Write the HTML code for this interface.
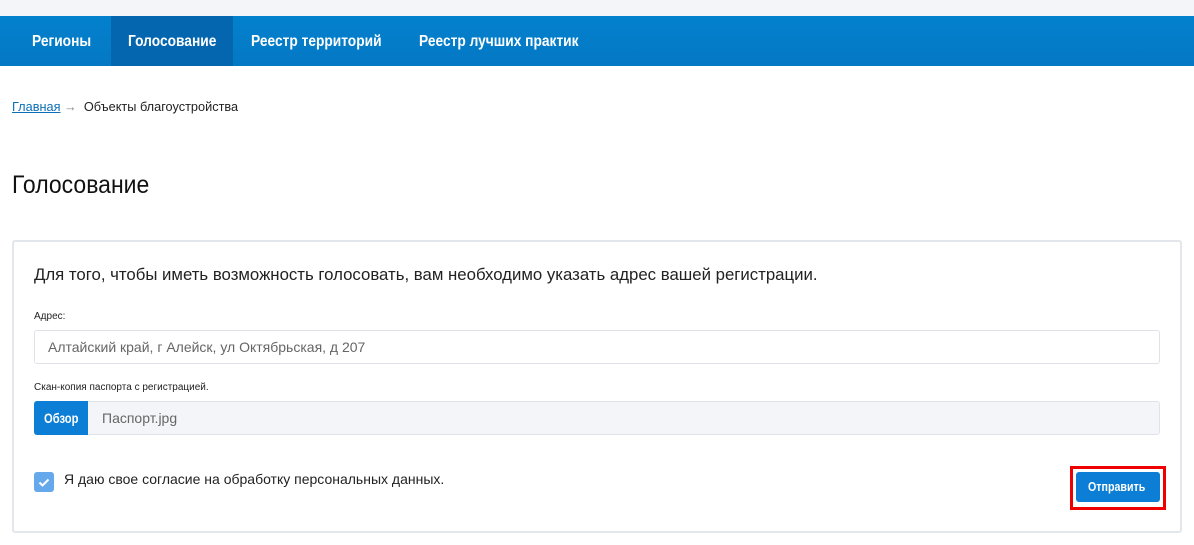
<!DOCTYPE html>
<html><head><meta charset="utf-8"><style>
*{margin:0;padding:0;box-sizing:border-box}
body{width:1194px;height:545px;background:#fff;font-family:"Liberation Sans",sans-serif;position:relative;overflow:hidden;color:#222}
.n{display:inline-block;transform-origin:left center;transform:scaleX(0.86)}
.top{position:absolute;left:0;top:0;width:1194px;height:16px;background:#f3f5f8}
.nav{position:absolute;left:0;top:16px;width:1194px;height:50px;background:linear-gradient(#0381cd,#0578c4)}
.nav div{position:absolute;top:0;height:50px;line-height:52px;color:#fff;font-size:16px;font-weight:bold;white-space:nowrap}
.act{background:#0566b0}
.a{position:absolute;white-space:nowrap}
.card{position:absolute;left:12px;top:240px;width:1170px;height:293px;border:2px solid #e3e6ea;border-radius:3px}
.inp{position:absolute;left:34px;width:1126px;height:34px;border:1px solid #dfe3e8;border-radius:3px;background:#fff;font-size:14px;color:#666;line-height:32px}
</style></head><body>
<div class="top"></div>
<div class="nav">
<div style="left:32px"><span class="n">Регионы</span></div>
<div class="act" style="left:111px;width:122px;padding-left:17px"><span class="n">Голосование</span></div>
<div style="left:251px"><span class="n">Реестр территорий</span></div>
<div style="left:419px"><span class="n">Реестр лучших практик</span></div>
</div>
<div class="a" style="left:12px;top:99px;font-size:13px"><span class="n" style="transform:scaleX(0.98)"><span style="color:#0a6fb8;text-decoration:underline">Главная</span> <span style="color:#888">→</span>&nbsp; Объекты благоустройства</span></div>
<div class="a" style="left:12px;top:171px;font-size:25px;color:#111"><span class="n" style="transform:scaleX(0.92)">Голосование</span></div>
<div class="card"></div>
<div class="a" style="left:34px;top:265px;font-size:16.8px">Для того, чтобы иметь возможность голосовать, вам необходимо указать адрес вашей регистрации.</div>
<div class="a" style="left:34px;top:311px;font-size:10px">Адрес:</div>
<div class="inp" style="top:330px;padding-left:13px">Алтайский край, г Алейск, ул Октябрьская, д 207</div>
<div class="a" style="left:34px;top:382px;font-size:10px">Скан-копия паспорта с регистрацией.</div>
<div class="inp" style="top:401px;background:#f3f5f9;padding-left:67px">Паспорт.jpg</div>
<div class="a" style="left:34px;top:401px;width:54px;height:34px;background:#0c7ed5;color:#fff;font-weight:bold;font-size:14px;line-height:34px;padding-left:10px;border-radius:3px 0 0 3px"><span class="n" style="transform:scaleX(0.8)">Обзор</span></div>
<div class="a" style="left:34px;top:472px;width:20px;height:20px;background:#65a9ec;border-radius:3px"><svg width="20" height="20"><path d="M5.5 10.5l3 3 6-6" stroke="#fff" stroke-width="2" fill="none"/></svg></div>
<div class="a" style="left:64px;top:471px;font-size:14px">Я даю свое согласие на обработку персональных данных.</div>
<div class="a" style="left:1070px;top:466px;width:96px;height:44px;border:3px solid #e00"></div>
<div class="a" style="left:1076px;top:472px;width:84px;height:30px;background:#0c7ed5;color:#fff;font-weight:bold;font-size:13px;line-height:30px;padding-left:12px;border-radius:3px"><span class="n" style="transform:scaleX(0.82)">Отправить</span></div>
</body></html>
